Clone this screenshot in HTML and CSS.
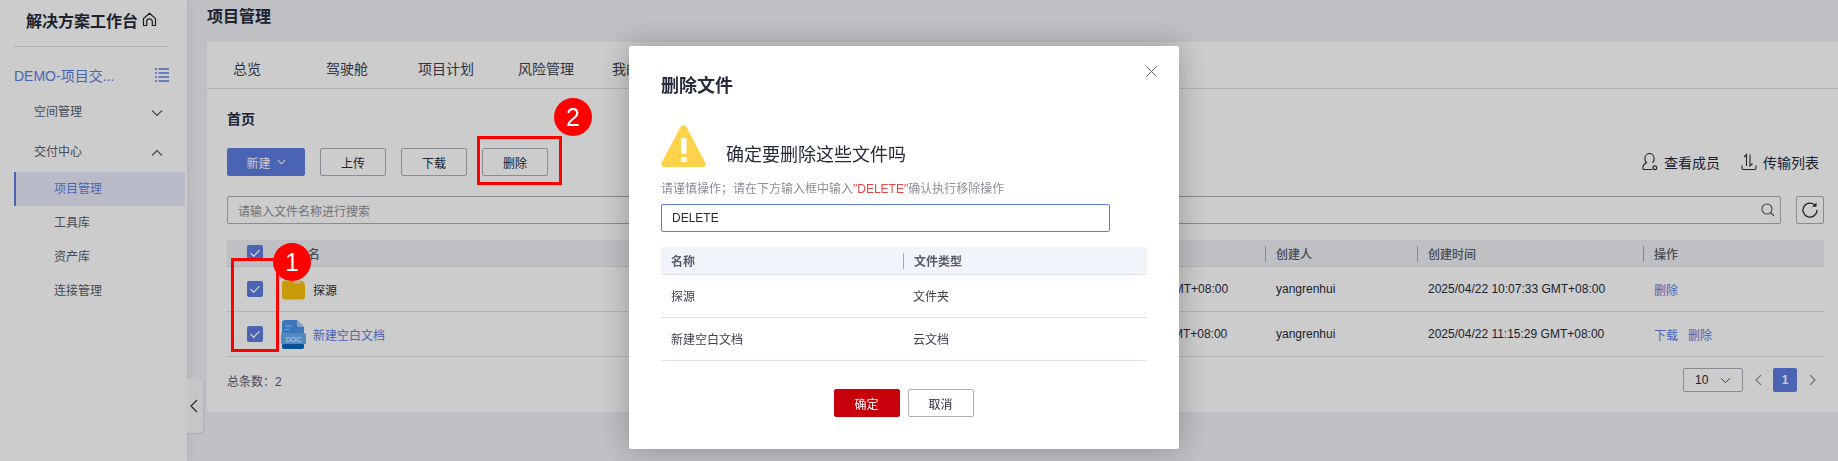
FILE: index.html
```html
<!DOCTYPE html>
<html lang="zh">
<head>
<meta charset="utf-8">
<title>项目管理</title>
<link rel="stylesheet" href="styles.css">
</head>
<body>
<div class="app">
  <aside class="sidebar">
    <div class="brand">
      <span>解决方案工作台</span>
      <svg class="home" viewBox="0 0 15 15" width="15" height="15"><path d="M1.500 13.500V6.600L7.500 1.200l6 5.400v6.900h-3.200V9.600a2.800 2.800 0 0 0-5.600 0v3.900z" fill="none" stroke="#1f222c" stroke-width="1.200" stroke-linejoin="round"/></svg>
    </div>
    <div class="project">
      <span>DEMO-项目交...</span>
      <svg viewBox="0 0 14 14" width="14" height="14"><path d="M0 1h2M3.500 1H14M0 5h2M3.500 5H14M0 9h2M3.500 9H14M0 13h2M3.500 13H14" stroke="#5e7ce0" stroke-width="1.400" fill="none"/></svg>
    </div>
    <nav class="nav">
      <div class="group">
        <span>空间管理</span>
        <svg viewBox="0 0 12 8" width="12" height="8"><path d="M1 1.500l5 5 5-5" fill="none" stroke="#555862" stroke-width="1.100"/></svg>
      </div>
      <div class="group">
        <span>交付中心</span>
        <svg viewBox="0 0 12 8" width="12" height="8"><path d="M1 6.500l5-5 5 5" fill="none" stroke="#555862" stroke-width="1.100"/></svg>
      </div>
      <div class="subs">
        <div class="sub active">项目管理</div>
        <div class="sub">工具库</div>
        <div class="sub">资产库</div>
        <div class="sub">连接管理</div>
      </div>
    </nav>
  </aside>
  <div class="collapse">
    <svg viewBox="0 0 8 14" width="8" height="14"><path d="M7 1L1 7l6 6" fill="none" stroke="#333" stroke-width="1.200"/></svg>
  </div>
  <main class="main">
    <h1 class="page-title">项目管理</h1>
    <section class="card">
      <div class="tabs">
        <span class="tab t1">总览</span>
        <span class="tab t2">驾驶舱</span>
        <span class="tab t3">项目计划</span>
        <span class="tab t4">风险管理</span>
        <span class="tab">我的交付</span>
      </div>
      <div class="body">
        <div class="crumb">首页</div>
        <div class="toolbar">
          <button class="btn primary">新建
            <svg viewBox="0 0 10 6" width="9" height="6"><path d="M1 1l4 4 4-4" fill="none" stroke="#fff" stroke-width="1.200"/></svg>
          </button>
          <button class="btn">上传</button>
          <button class="btn">下载</button>
          <button class="btn">删除</button>
          <div class="tools">
            <span class="tool">
              <svg viewBox="0 0 16 18" width="16" height="18"><path d="M1 16.500v-3c0-1.800 2-3 3.500-3.800A4.500 4.500 0 0 1 3 6V5a4.500 4.500 0 0 1 9 0v1a4.500 4.500 0 0 1-1.500 3.700M1 16.500h9" fill="none" stroke="#2b2e38" stroke-width="1.100"/><circle cx="12.800" cy="14.800" r="1.900" fill="none" stroke="#2b2e38" stroke-width="1.200"/></svg>
              查看成员
            </span>
            <span class="tool">
              <svg viewBox="0 0 16 18" width="16" height="18"><path d="M5.500 13V1.500L3 4M9 1.500V13l2.500-2.500M1 12.500v2.500a1.500 1.500 0 0 0 1.500 1.500h11a1.500 1.500 0 0 0 1.500-1.500v-2.500" fill="none" stroke="#2b2e38" stroke-width="1.100"/></svg>
              传输列表
            </span>
          </div>
        </div>
        <div class="search-row">
          <div class="search">
            <span>请输入文件名称进行搜索</span>
            <svg viewBox="0 0 14 14" width="14" height="14"><circle cx="6" cy="6" r="5" fill="none" stroke="#555a68" stroke-width="1.100"/><path d="M9.500 9.500l3.500 3.500" stroke="#555a68" stroke-width="1.100"/></svg>
          </div>
          <div class="refresh">
            <svg viewBox="0 0 16 16" width="16" height="16"><path d="M13.300 3.500A7 7 0 1 0 15 8" fill="none" stroke="#2b2e38" stroke-width="1.300"/><path d="M14.500 0.500v4.300h-4.300z" fill="#2b2e38"/></svg>
          </div>
        </div>
        <div class="table">
          <div class="row head">
            <div class="cell name"><span class="check"><svg viewBox="0 0 16 16"><path d="M3.500 8l3.200 3.200 5.800-6" fill="none" stroke="#fff" stroke-width="1.300"/></svg></span><span class="head-label">名</span></div>
            <div class="cell sep">修改时间</div>
            <div class="cell sep">创建人</div>
            <div class="cell sep">创建时间</div>
            <div class="cell sep">操作</div>
          </div>
          <div class="row">
            <div class="cell name"><span class="check"><svg viewBox="0 0 16 16"><path d="M3.500 8l3.200 3.200 5.800-6" fill="none" stroke="#fff" stroke-width="1.300"/></svg></span>
              <svg class="file" viewBox="0 0 25 29" width="25" height="29"><path d="M1 8.500a3 3 0 0 1 3-3h15a5 5 0 0 1 5 5v11a3 3 0 0 1-3 3H4a3 3 0 0 1-3-3z" fill="#fbc30c"/><path d="M13 7.500h7.500" stroke="#ffe9a6" stroke-width="1.500"/></svg>
              <span class="dark">探源</span></div>
            <div class="cell">2025/04/22 10:07:33 GMT+08:00</div>
            <div class="cell">yangrenhui</div>
            <div class="cell">2025/04/22 10:07:33 GMT+08:00</div>
            <div class="cell"><a class="link">删除</a></div>
          </div>
          <div class="row">
            <div class="cell name"><span class="check"><svg viewBox="0 0 16 16"><path d="M3.500 8l3.200 3.200 5.800-6" fill="none" stroke="#fff" stroke-width="1.300"/></svg></span>
              <svg class="file" viewBox="0 0 25 29" width="25" height="29"><path d="M1 3a3 3 0 0 1 3-3h12l7 7v19a3 3 0 0 1-3 3H4a3 3 0 0 1-3-3z" fill="#4a96e8"/><path d="M16 0l7 7h-5a2 2 0 0 1-2-2z" fill="#a9d0f5"/><path d="M4 6h7M4 9.500h4" stroke="#a9d0f5" stroke-width="1.200"/><rect x="1" y="24" width="22" height="5" rx="2" fill="#0b64bd"/><rect x="0" y="13" width="25" height="11" rx="1.500" fill="#6aaaf0"/><text x="12.500" y="22" class="doc-label">DOC</text></svg>
              <a class="link">新建空白文档</a></div>
            <div class="cell">2025/04/22 11:15:29 GMT+08:00</div>
            <div class="cell">yangrenhui</div>
            <div class="cell">2025/04/22 11:15:29 GMT+08:00</div>
            <div class="cell"><a class="link gap">下载</a><a class="link">删除</a></div>
          </div>
        </div>
        <div class="footer">
          <span>总条数：2</span>
          <div class="pager">
            <span class="size">10
              <svg viewBox="0 0 12 8" width="11" height="7"><path d="M1 1.500l5 5 5-5" fill="none" stroke="#444" stroke-width="1.100"/></svg>
            </span>
            <svg class="arrow" viewBox="0 0 7 12" width="7" height="12"><path d="M6 1L1 6l5 5" fill="none" stroke="#8e919c" stroke-width="1.100"/></svg>
            <span class="page">1</span>
            <svg class="arrow" viewBox="0 0 7 12" width="7" height="12"><path d="M1 1l5 5-5 5" fill="none" stroke="#8e919c" stroke-width="1.100"/></svg>
          </div>
        </div>
      </div>
    </section>
  </main>
</div>

<div class="overlay"></div>

<div class="modal">
  <header class="modal-head">
    <h2>删除文件</h2>
    <svg viewBox="0 0 11 11" width="11" height="11"><path d="M.5.500l10 10M10.500.500l-10 10" stroke="#5b5f6b" stroke-width="1"/></svg>
  </header>
  <div class="confirm">
    <svg viewBox="0 0 45 42" width="45" height="42"><path d="M19.500 2a3.400 3.400 0 0 1 6 0l19 36a2.800 2.800 0 0 1-2.500 4H3a2.800 2.800 0 0 1-2.500-4z" fill="#fed24a"/><rect x="20" y="13" width="5.500" height="16" fill="#fff"/><rect x="20" y="32" width="5.500" height="5" fill="#fff"/></svg>
    <span>确定要删除这些文件吗</span>
  </div>
  <p class="note">请谨慎操作；请在下方输入框中输入<em>"DELETE"</em>确认执行移除操作</p>
  <div class="input">DELETE</div>
  <div class="mtable">
    <div class="mrow mhead"><div class="mcell">名称</div><div class="mcell msep">文件类型</div></div>
    <div class="mrow"><div class="mcell">探源</div><div class="mcell">文件夹</div></div>
    <div class="mrow"><div class="mcell">新建空白文档</div><div class="mcell">云文档</div></div>
  </div>
  <div class="actions">
    <button class="mbtn ok">确定</button>
    <button class="mbtn">取消</button>
  </div>
</div>

<div class="mark box-one"></div>
<div class="mark box-two"></div>
<div class="badge badge-one">1</div>
<div class="badge badge-two">2</div>
</body>
</html>
```
FILE: styles.css
```css
* { box-sizing: border-box; }
html, body { margin: 0; height: 461px; overflow: hidden; }
body {
  font-family: "Liberation Sans", "Noto Sans CJK SC", sans-serif;
  font-size: 12px;
  color: #252b3a;
  background: #eff0f5;
}
svg { display: block; flex: none; }
button { font: inherit; }

.app { display: flex; height: 461px; }

/* sidebar */
.sidebar {
  width: 187px;
  flex: none;
  background: #fff;
  box-shadow: 2px 0 6px rgba(0, 0, 0, .06);
  padding: 0 2px 0 14px;
}
.brand {
  width: 155px;
  height: 47px;
  padding: 0 0 7px 12px;
  border-bottom: 1px solid #d8dae0;
  display: flex;
  align-items: center;
  gap: 4px;
  font-size: 16px;
  font-weight: 700;
  color: #252b3a;
  white-space: nowrap;
}
.project {
  width: 155px;
  height: 36px;
  margin-top: 10px;
  display: flex;
  align-items: center;
  justify-content: space-between;
  font-size: 14px;
  color: #5e7ce0;
}
.nav { display: flex; flex-direction: column; }
.group {
  height: 34px;
  margin-bottom: 6px;
  padding: 0 16px 0 20px;
  display: flex;
  align-items: center;
  justify-content: space-between;
  color: #575d6c;
}
.group svg { margin: 6px 6px 0 0; }
.subs { margin-top: -1px; }
.sub {
  height: 34px;
  line-height: 34px;
  padding-left: 40px;
  color: #575d6c;
}
.sub.active {
  padding-left: 38px;
  border-left: 2px solid #5e7ce0;
  background: #e8ecfa;
  color: #5e7ce0;
}
.collapse {
  position: absolute;
  left: 187px;
  top: 379px;
  width: 16px;
  height: 54px;
  background: #f8f8f8;
  border-radius: 0 4px 4px 0;
  box-shadow: 1px 1px 2px rgba(0, 0, 0, .08);
  display: flex;
  align-items: center;
  padding-left: 3px;
}

/* main */
.main {
  flex: 1;
  min-width: 0;
  padding-left: 20px;
}
.page-title {
  height: 42px;
  margin: 0;
  padding-bottom: 8px;
  font-size: 16px;
  font-weight: 700;
  line-height: 34px;
  color: #252b3a;
}
.card { height: 370px; background: #fff; }
.tabs {
  height: 47px;
  padding: 5px 0 0 26px;
  border-bottom: 1px solid #dfe1e8;
  display: flex;
  align-items: center;
  font-size: 14px;
  color: #3c414e;
  white-space: nowrap;
}
.tab { flex: none; }
.t1 { width: 93px; }
.t2 { width: 92px; }
.t3 { width: 100px; }
.t4 { width: 94px; }

.body { padding: 0 14px 0 20px; }
.crumb {
  height: 59px;
  padding-top: 18px;
  font-size: 14px;
  font-weight: 700;
  line-height: 24px;
  color: #252b3a;
}
.toolbar {
  height: 28px;
  display: flex;
  align-items: center;
  gap: 15px;
}
.btn {
  width: 66px;
  height: 28px;
  padding: 0;
  background: #fff;
  border: 1px solid #adb0b8;
  border-radius: 2px;
  color: #252b3a;
  font-size: 12px;
}
.btn.primary {
  width: 78px;
  display: flex;
  align-items: center;
  justify-content: center;
  gap: 6px;
  background: #5e7ce0;
  border-color: #5e7ce0;
  color: #fff;
  font-size: 12px;
}
.tools {
  margin-left: auto;
  margin-right: 5px;
  display: flex;
  gap: 21px;
  font-size: 14px;
  color: #252b3a;
}
.tool { display: flex; align-items: center; gap: 6px; white-space: nowrap; }

.search-row {
  margin-top: 20px;
  display: flex;
  justify-content: space-between;
}
.search {
  width: 1554px;
  height: 28px;
  padding: 0 5px 0 10px;
  background: #fff;
  border: 1px solid #adb0b8;
  border-radius: 2px;
  display: flex;
  align-items: center;
  justify-content: space-between;
  color: #8a8e99;
}
.refresh {
  width: 28px;
  height: 28px;
  border: 1px solid #adb0b8;
  border-radius: 2px;
  display: flex;
  align-items: center;
  justify-content: center;
}

.table { margin-top: 16px; }
.row {
  display: grid;
  grid-template-columns: 813px 225px 152px 226px 181px;
  height: 45px;
  border-bottom: 1px solid #dfe1e8;
  color: #252b3a;
}
.row.head {
  height: 27px;
  background: #eef0f5;
  color: #575d6c;
  font-weight: 500;
}
.cell {
  display: flex;
  align-items: center;
  padding-left: 11px;
  white-space: nowrap;
}
.cell.sep { position: relative; }
.cell.sep::before {
  content: "";
  position: absolute;
  left: 0;
  top: 6px;
  height: 16px;
  border-left: 1px solid #a6a9b4;
}
.cell.name { padding-left: 20px; }
.check {
  width: 16px;
  height: 16px;
  border-radius: 2px;
  background: #5e7ce0;
  flex: none;
}
.head-label { margin-left: 45px; }
.file { margin: 0 7px 0 18px; }
.dark { color: #252b3a; }
.doc-label { font: 7px "Liberation Sans", sans-serif; fill: #fff; text-anchor: middle; }
.link { color: #5e7ce0; }
.link.gap { margin-right: 10px; }

.footer {
  height: 54px;
  display: flex;
  align-items: center;
  justify-content: space-between;
  color: #575d6c;
  padding-bottom: 8px;
}
.pager { display: flex; align-items: center; }
.size {
  width: 60px;
  height: 24px;
  padding: 0 11px;
  border: 1px solid #adb0b8;
  border-radius: 2px;
  display: flex;
  align-items: center;
  justify-content: space-between;
  color: #252b3a;
}
.arrow { margin: 0 11px 0 12px; }
.page {
  width: 24px;
  height: 24px;
  background: #5e7ce0;
  border-radius: 2px;
  color: #fff;
  font-weight: 700;
  line-height: 24px;
  text-align: center;
}
.pager .arrow:last-child { margin-right: 8px; }

/* dim layer and dialog */
.overlay {
  position: fixed;
  inset: 0;
  background: rgba(0, 0, 0, .2);
}
.modal {
  position: fixed;
  left: 629px;
  top: 46px;
  width: 550px;
  height: 403px;
  padding: 0 32px;
  background: #fff;
  border-radius: 2px;
  box-shadow: 0 0 30px rgba(0, 0, 0, .28);
}
.modal-head {
  height: 62px;
  display: flex;
  justify-content: space-between;
  padding: 20px 0 0;
}
.modal-head h2 {
  margin: 0;
  font-size: 18px;
  font-weight: 700;
  line-height: 41px;
  color: #252b3a;
}
.modal-head svg { margin: 0 -10px 0 0; }
.confirm {
  margin-top: 17px;
  height: 42px;
  display: flex;
  align-items: center;
  gap: 20px;
  font-size: 18px;
  color: #252b3a;
}
.confirm span { margin-top: 13px; }
.note {
  margin: 13px 0 0;
  height: 18px;
  line-height: 18px;
  color: #8a8e99;
  white-space: nowrap;
}
.note em { font-style: normal; color: #e54545; }
.input {
  width: 449px;
  height: 28px;
  margin-top: 6px;
  padding-left: 10px;
  border: 1px solid #5e7ce0;
  border-radius: 2px;
  line-height: 26px;
  color: #252b3a;
}
.mtable { margin-top: 15px; }
.mrow {
  display: grid;
  grid-template-columns: 242px 244px;
  height: 43px;
  border-bottom: 1px solid #dfe1e8;
  color: #3c414e;
}
.mrow.mhead {
  height: 28px;
  background: #f1f4fb;
  color: #575d6c;
  font-weight: 700;
}
.mcell {
  display: flex;
  align-items: center;
  padding: 0 0 1px 10px;
}
.msep { position: relative; padding-left: 11px; }
.msep::before {
  content: "";
  position: absolute;
  left: 0;
  top: 6px;
  height: 16px;
  border-left: 1px solid #a6a9b4;
}
.actions {
  margin-top: 28px;
  display: flex;
  justify-content: center;
  gap: 8px;
  padding-right: 1px;
}
.mbtn {
  width: 66px;
  height: 28px;
  padding: 0;
  background: #fff;
  border: 1px solid #adb0b8;
  border-radius: 2px;
  color: #252b3a;
  font-size: 12px;
}
.mbtn.ok { background: #c7000b; border-color: #c7000b; color: #fff; }

/* screenshot annotations */
.mark {
  position: fixed;
  border: 3px solid #ff0000;
}
.box-one { left: 231px; top: 258px; width: 48px; height: 94px; }
.box-two { left: 477px; top: 136px; width: 85px; height: 49px; }
.badge {
  position: fixed;
  width: 38px;
  height: 38px;
  border-radius: 50%;
  background: #ff0000;
  color: #fff;
  font-family: "Liberation Sans", sans-serif;
  font-size: 25px;
  line-height: 38px;
  text-align: center;
}
.badge-one { left: 273px; top: 243px; }
.badge-two { left: 554px; top: 98px; }
```
